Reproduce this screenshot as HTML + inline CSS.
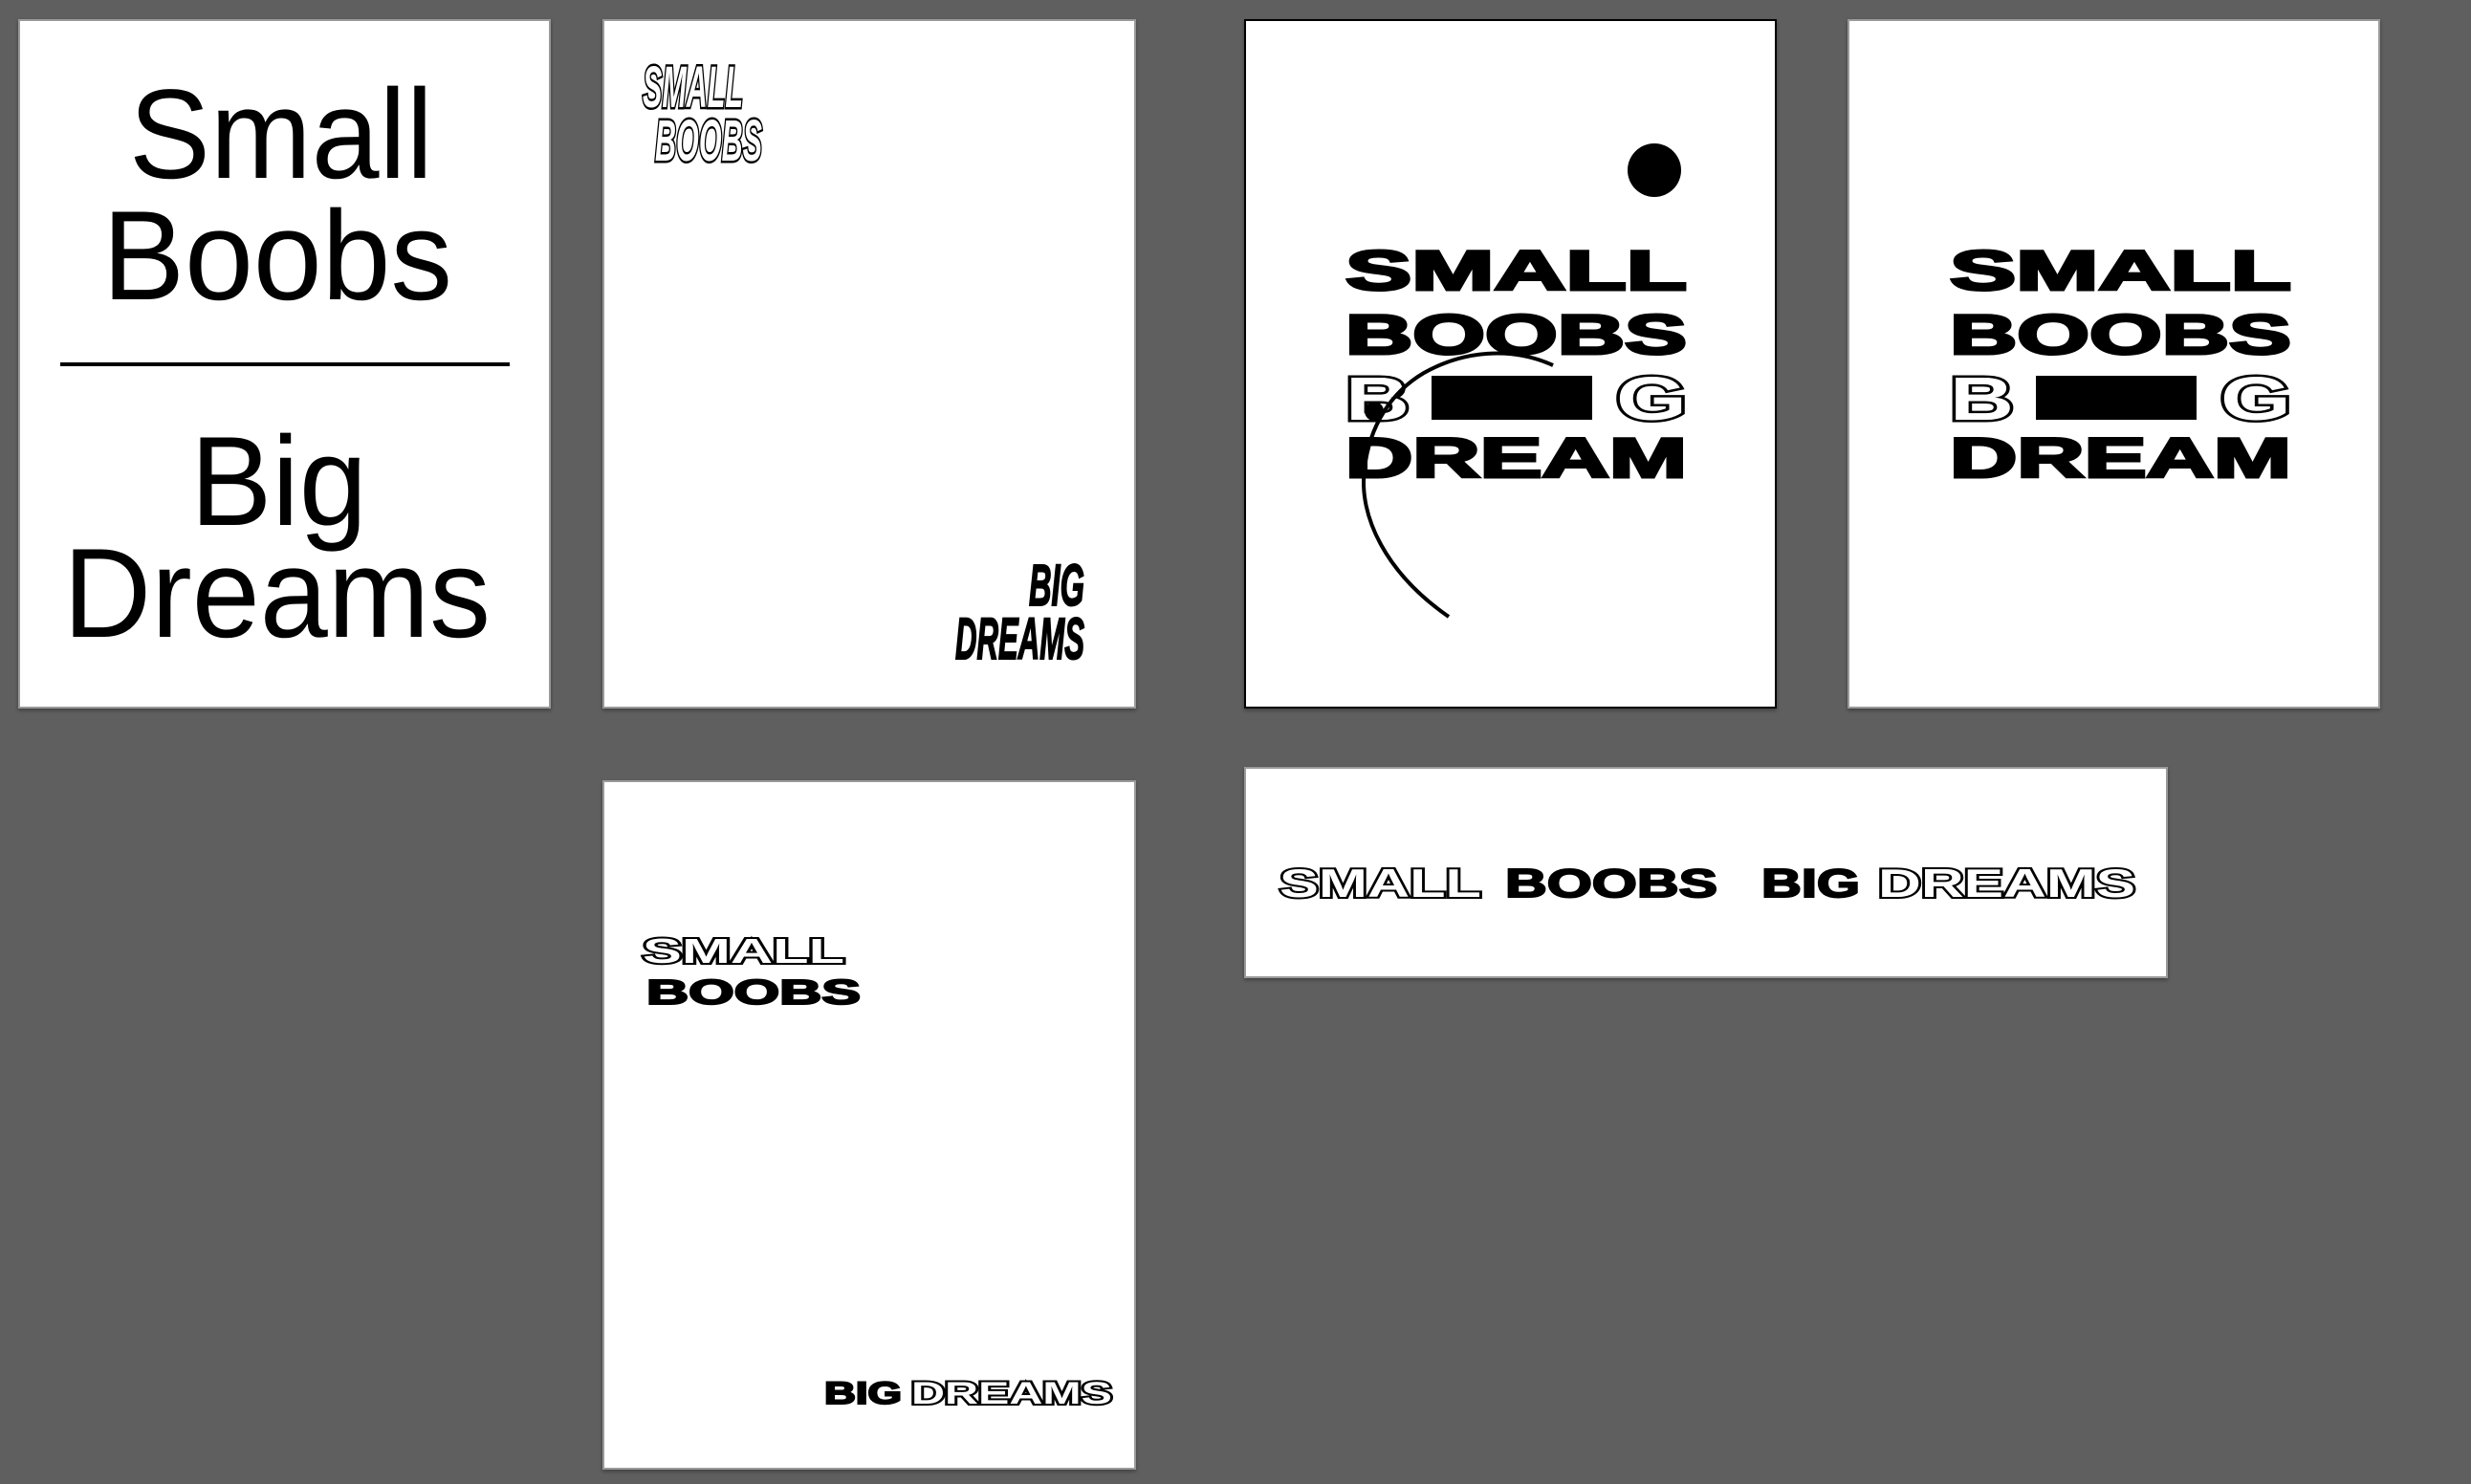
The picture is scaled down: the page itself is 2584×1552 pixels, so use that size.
<!DOCTYPE html>
<html><head><meta charset="utf-8"><style>
html,body{margin:0;padding:0;background:#5f5f5f;width:2584px;height:1552px;overflow:hidden}
svg{display:block}
text{font-family:"Liberation Sans",sans-serif}
</style></head><body>
<svg width="2584" height="1552" viewBox="0 0 2584 1552" xmlns="http://www.w3.org/2000/svg">
<defs><filter id="sh" x="-5%" y="-5%" width="110%" height="110%"><feDropShadow dx="0" dy="2" stdDeviation="2" flood-color="#000" flood-opacity="0.35"/></filter></defs>
<rect width="2584" height="1552" fill="#5f5f5f"/>
<g filter="url(#sh)">
<rect x="20" y="21" width="555" height="719" fill="#fff" stroke="#9a9a9a" stroke-width="2"/>
<rect x="631" y="21" width="556" height="719" fill="#fff" stroke="#9a9a9a" stroke-width="2"/>
<rect x="1302" y="21" width="555" height="719" fill="#fff" stroke="#000" stroke-width="2"/>
<rect x="1933" y="21" width="555" height="719" fill="#fff" stroke="#9a9a9a" stroke-width="2"/>
<rect x="631" y="817" width="556" height="719" fill="#fff" stroke="#9a9a9a" stroke-width="2"/>
<rect x="1302" y="803" width="964" height="219" fill="#fff" stroke="#9a9a9a" stroke-width="2"/>
</g>
<g font-size="133" fill="#000">
<text x="135" y="186" textLength="318" lengthAdjust="spacingAndGlyphs">Small</text>
<text x="107" y="313" textLength="366" lengthAdjust="spacingAndGlyphs">Boobs</text>
<text x="199" y="549" textLength="185" lengthAdjust="spacingAndGlyphs">Big</text>
<text x="66" y="666" textLength="447" lengthAdjust="spacingAndGlyphs">Dreams</text>
</g>
<rect x="63" y="379" width="470" height="4" fill="#000"/>
<g font-size="61" font-weight="bold" font-style="italic">
<text x="672" y="112" textLength="105" lengthAdjust="spacingAndGlyphs" fill="#fff" stroke="#000" stroke-width="5" paint-order="stroke">SMALL</text>
<text x="685" y="168" textLength="112" lengthAdjust="spacingAndGlyphs" fill="#fff" stroke="#000" stroke-width="5" paint-order="stroke">BOOBS</text>
<text x="1076" y="633" textLength="58" lengthAdjust="spacingAndGlyphs" fill="#000" stroke="#000" stroke-width="2">BIG</text>
<text x="999" y="689" textLength="135" lengthAdjust="spacingAndGlyphs" fill="#000" stroke="#000" stroke-width="2">DREAMS</text>
</g>
<g font-size="58" font-weight="bold" fill="#000" stroke="#000" stroke-width="3">
<text x="1407" y="303" textLength="357" lengthAdjust="spacingAndGlyphs">SMALL</text>
<text x="1407" y="370" textLength="357" lengthAdjust="spacingAndGlyphs">BOOBS</text>
<text x="1407" y="499" textLength="357" lengthAdjust="spacingAndGlyphs">DREAM</text>
</g>
<g font-size="64" font-weight="bold" fill="#fff" stroke="#000" stroke-width="5" paint-order="stroke">
<text x="1407" y="439" textLength="67" lengthAdjust="spacingAndGlyphs">B</text>
<text x="1690" y="439" textLength="74" lengthAdjust="spacingAndGlyphs">G</text>
</g>
<rect x="1497" y="393" width="168" height="46" fill="#000"/>
<circle cx="1730" cy="178" r="28" fill="#000"/>
<path d="M1515 645 C1450 600 1420 540 1427 490 C1432 445 1455 410 1489 390 C1530 367 1580 362 1624 382" fill="none" stroke="#000" stroke-width="4"/>
<circle cx="1437" cy="430" r="10" fill="#000"/>
<g font-size="58" font-weight="bold" fill="#000" stroke="#000" stroke-width="3">
<text x="2039" y="303" textLength="357" lengthAdjust="spacingAndGlyphs">SMALL</text>
<text x="2039" y="370" textLength="357" lengthAdjust="spacingAndGlyphs">BOOBS</text>
<text x="2039" y="499" textLength="357" lengthAdjust="spacingAndGlyphs">DREAM</text>
</g>
<g font-size="64" font-weight="bold" fill="#fff" stroke="#000" stroke-width="5" paint-order="stroke">
<text x="2039" y="439" textLength="67" lengthAdjust="spacingAndGlyphs">B</text>
<text x="2322" y="439" textLength="74" lengthAdjust="spacingAndGlyphs">G</text>
</g>
<rect x="2129" y="393" width="168" height="46" fill="#000"/>
<g font-size="36" font-weight="bold">
<text x="672" y="1007" textLength="211" lengthAdjust="spacingAndGlyphs" fill="#fff" stroke="#000" stroke-width="4" paint-order="stroke">SMALL</text>
<text x="676" y="1050" textLength="224" lengthAdjust="spacingAndGlyphs" fill="#000" stroke="#000" stroke-width="2">BOOBS</text>
</g>
<g font-size="32" font-weight="bold">
<text x="862" y="1468" textLength="81" lengthAdjust="spacingAndGlyphs" fill="#000" stroke="#000" stroke-width="2">BIG</text>
<text x="953" y="1468" textLength="210" lengthAdjust="spacingAndGlyphs" fill="#fff" stroke="#000" stroke-width="4" paint-order="stroke">DREAMS</text>
</g>
<g font-size="42" font-weight="bold">
<text x="1338" y="938" textLength="211" lengthAdjust="spacingAndGlyphs" fill="#fff" stroke="#000" stroke-width="4" paint-order="stroke">SMALL</text>
<text x="1574" y="938" textLength="222" lengthAdjust="spacingAndGlyphs" fill="#000" stroke="#000" stroke-width="2">BOOBS</text>
<text x="1842" y="938" textLength="103" lengthAdjust="spacingAndGlyphs" fill="#000" stroke="#000" stroke-width="2">BIG</text>
<text x="1964" y="938" textLength="269" lengthAdjust="spacingAndGlyphs" fill="#fff" stroke="#000" stroke-width="4" paint-order="stroke">DREAMS</text>
</g>
</svg>
</body></html>
